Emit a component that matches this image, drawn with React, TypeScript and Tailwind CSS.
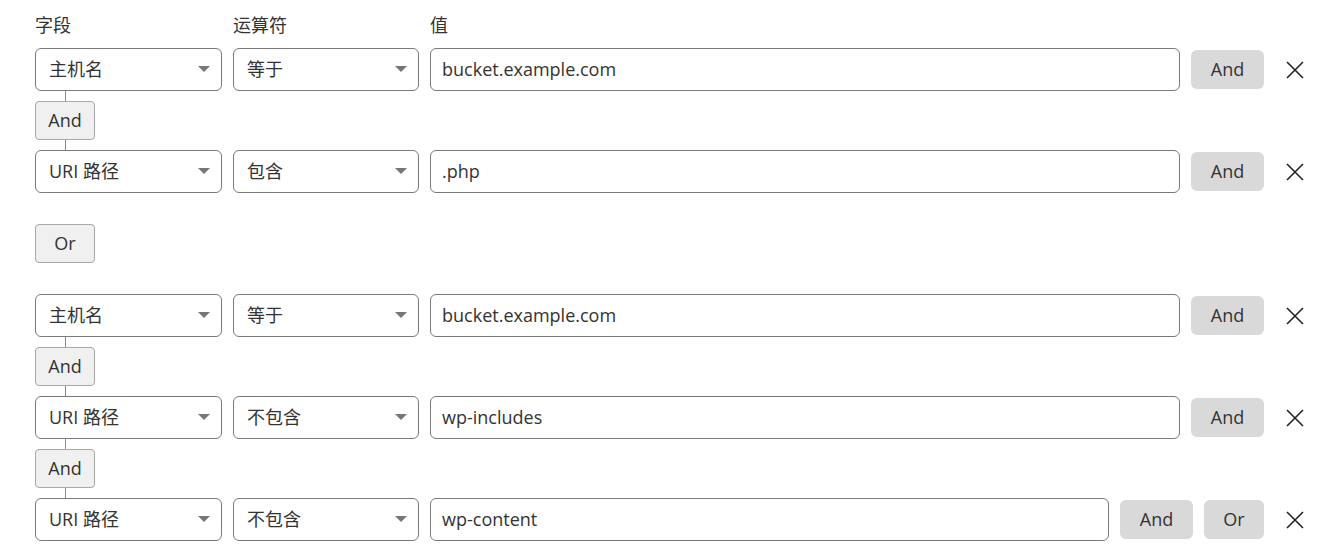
import { ChevronDown } from 'lucide-react';

type Cond = { field: string; op: string; value: string };

const groups: Cond[][] = [
    [
        { field: '主机名', op: '等于', value: 'bucket.example.com' },
        { field: 'URI 路径', op: '包含', value: '.php' },
    ],
    [
        { field: '主机名', op: '等于', value: 'bucket.example.com' },
        { field: 'URI 路径', op: '不包含', value: 'wp-includes' },
        { field: 'URI 路径', op: '不包含', value: 'wp-content' },
    ],
];

const font = { fontFamily: '"Open Sans", "Noto Sans CJK SC", sans-serif' };

function Caret() {
    return (
        <svg width="12" height="7" viewBox="0 0 12 7" className="shrink-0">
            <path d="M0 0 L12 0 L6 6 Z" fill="#777" />
        </svg>
    );
}

function Select({ text, width }: { text: string; width: string }) {
    return (
        <div className={`${width} h-[43px] shrink-0 rounded-[6px] border border-[#7a7a7a] bg-white flex items-center justify-between pl-[13px] pr-[11px] text-[18px] text-[#333]`}>
            <span>{text}</span>
            <Caret />
        </div>
    );
}

function CloseIcon() {
    return (
        <svg width="18" height="18" viewBox="0 0 18 18">
            <path d="M1 1 L17 17 M17 1 L1 17" stroke="#222" strokeWidth="1.6" />
        </svg>
    );
}

function Row({ c, last }: { c: Cond; last: boolean }) {
    return (
        <div className="flex items-center gap-[11px]">
            <Select text={c.field} width="w-[187px]" />
            <Select text={c.op} width="w-[186px]" />
            <div className="flex-1 h-[43px] rounded-[6px] border border-[#7a7a7a] bg-white flex items-center px-[11px] text-[18px] text-[#333]">
                {c.value}
            </div>
            <button className="w-[73px] h-[39px] rounded-[6px] bg-[#d9d9d9] text-[18px] text-[#333]">And</button>
            {last && <button className="w-[60px] h-[39px] rounded-[6px] bg-[#d9d9d9] text-[18px] text-[#333]">Or</button>}
            <div className="w-[40px] flex justify-center">
                <CloseIcon />
            </div>
        </div>
    );
}

function Connector({ label }: { label: string }) {
    return (
        <div className="flex flex-col items-center w-[60px]">
            <div className="w-px h-[10px] bg-[#888]" />
            <div className="w-[60px] h-[39px] rounded-[4px] border border-[#a8a8a8] bg-[#f0f0f0] flex items-center justify-center text-[18px] text-[#333]">
                {label}
            </div>
            <div className="w-px h-[10px] bg-[#888]" />
        </div>
    );
}

export default function App() {
    return (
        <div className="w-[1328px] h-[560px] bg-white pl-[35px] pr-[13px] pt-[13px]" style={font}>
            <div className="flex text-[18px] text-[#333] mb-[11px] h-[24px] items-center">
                <span className="w-[198px]">字段</span>
                <span className="w-[197px]">运算符</span>
                <span>值</span>
            </div>
            {groups.map((g, gi) => (
                <div key={gi}>
                    {gi > 0 && (
                        <div className="py-[31px]">
                            <div className="w-[60px] h-[39px] rounded-[4px] border border-[#a8a8a8] bg-[#f0f0f0] flex items-center justify-center text-[18px] text-[#333]">
                                Or
                            </div>
                        </div>
                    )}
                    {g.map((c, i) => (
                        <div key={i}>
                            {i > 0 && <Connector label="And" />}
                            <Row c={c} last={gi === groups.length - 1 && i === g.length - 1} />
                        </div>
                    ))}
                </div>
            ))}
        </div>
    );
}
